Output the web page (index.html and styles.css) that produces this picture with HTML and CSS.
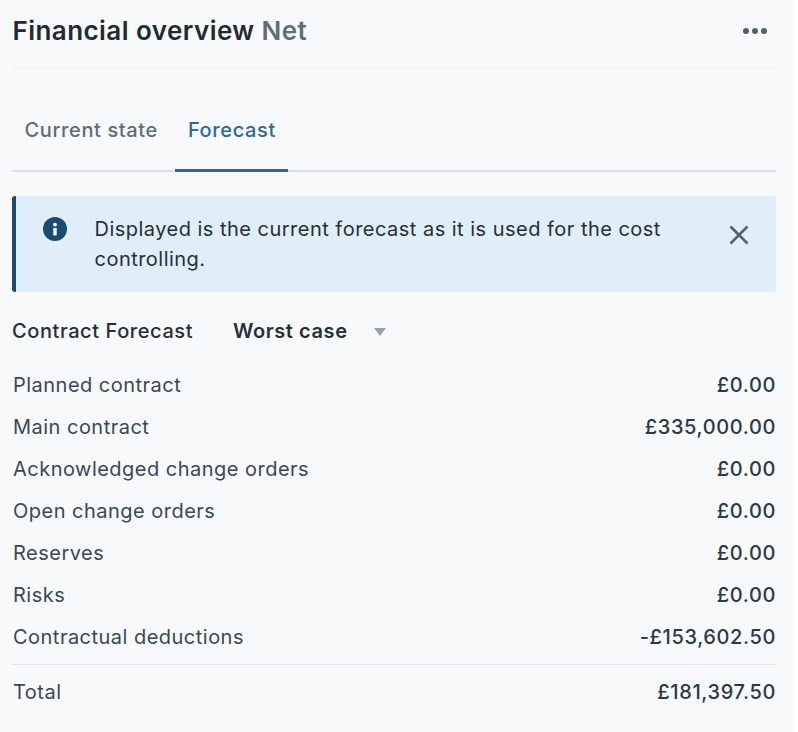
FILE: index.html
```html
<!DOCTYPE html>
<html lang="en">
<head>
<meta charset="utf-8">
<title>Financial overview</title>
<link rel="stylesheet" href="styles.css">
</head>
<body>
<main class="panel">
  <header class="head">
    <h1 class="title">Financial overview <span class="title-sub">Net</span></h1>
    <button class="more" aria-label="More"><span></span><span></span><span></span></button>
  </header>
  <nav class="tabs">
    <a class="tab">Current state</a>
    <a class="tab tab-active">Forecast</a>
  </nav>
  <div class="notice">
    <svg class="notice-icon" viewBox="0 0 24 24" width="24" height="24"><circle cx="12" cy="12" r="12" fill="#1b4b72"/><circle cx="12" cy="7.6" r="1.9" fill="#fff"/><rect x="10.3" y="11" width="3.4" height="7.4" rx="0.6" fill="#fff"/></svg>
    <p class="notice-text">Displayed is the current forecast as it is used for the cost controlling.</p>
    <svg class="notice-close" viewBox="0 0 20 20" width="20" height="20"><path d="M1.5 1.5 18.5 18.5M18.5 1.5 1.5 18.5" stroke="#566269" stroke-width="2.6" fill="none"/></svg>
  </div>
  <div class="selector">
    <span class="selector-label">Contract Forecast</span>
    <span class="selector-value">Worst case</span>
    <span class="caret"></span>
  </div>
  <dl class="rows">
    <div class="row"><dt>Planned contract</dt><dd>£0.00</dd></div>
    <div class="row"><dt>Main contract</dt><dd>£335,000.00</dd></div>
    <div class="row"><dt>Acknowledged change orders</dt><dd>£0.00</dd></div>
    <div class="row"><dt>Open change orders</dt><dd>£0.00</dd></div>
    <div class="row"><dt>Reserves</dt><dd>£0.00</dd></div>
    <div class="row"><dt>Risks</dt><dd>£0.00</dd></div>
    <div class="row"><dt>Contractual deductions</dt><dd>-£153,602.50</dd></div>
    <div class="row row-total"><dt>Total</dt><dd>£181,397.50</dd></div>
  </dl>
</main>
</body>
</html>
```
FILE: styles.css
```css
* { box-sizing: border-box; }
html, body { margin: 0; height: 100%; background: #fff; }
body { font-family: Inter, "Liberation Sans", sans-serif; color: #2b3a47; letter-spacing: 0.48px; }
.panel { width: 794px; height: 732px; background: #f8f9fb; padding: 0 18px 0 12px; }
.head { height: 68px; display: flex; align-items: center; justify-content: space-between; border-bottom: 1px solid #f0f1f3; padding-bottom: 6px; }
.title { margin: 0 0 0 0.5px; font-size: 26px; line-height: 32px; font-weight: 600; color: #212a2f; letter-spacing: 0.44px; }
.title-sub { color: #5f6d75; }
.more { display: flex; gap: 3px; border: 0; background: none; padding: 0; margin: 0 9px 0 0; }
.more span { width: 6px; height: 6px; border-radius: 50%; background: #525f69; }
.tabs { display: flex; gap: 5px; height: 104px; border-bottom: 2px solid #dcdfe6; margin-bottom: 24px; }
.tab { height: 104px; padding: 23px 12.5px 0; display: flex; align-items: center; font-size: 20px; font-weight: 500; color: #5f6d75; letter-spacing: 0.62px; border-bottom: 3px solid transparent; }
.tab-active { color: #2f6796; border-bottom-color: #2f6796; border-radius: 2px 2px 0 0; }
.notice { height: 96px; display: flex; align-items: flex-start; background: #e0eefa; border-left: 4px solid #1b4b72; border-radius: 3px; padding: 21px 27px 0 27px; }
.notice-icon { flex: none; margin-right: 28px; }
.notice-text { margin: -3px 0 0 -0.5px; flex: 1; font-size: 20px; line-height: 30px; color: #262f35; }
.notice-close { flex: none; margin: 8px 0 0 40px; }
.selector { display: flex; align-items: center; height: 30px; margin-top: 24px; font-size: 20px; font-weight: 500; color: #262f35; letter-spacing: 0.58px; }
.selector-label { width: 221px; }
.selector-value { font-weight: 600; margin-right: 26px; }
.caret { width: 0; height: 0; border-left: 6.5px solid transparent; border-right: 6.5px solid transparent; border-top: 8px solid #98a1ac; margin-top: 2px; }
.rows { margin: 18px 0 0; }
.row { display: flex; justify-content: space-between; align-items: center; height: 42px; font-size: 20px; }
.row dt { color: #3a4855; margin-left: 1px; }
.row dd { margin: 0; color: #2b3a47; font-weight: 450; letter-spacing: 0.62px; }
.row-total { height: 55px; border-top: 1px solid #e4e6ea; margin-top: 6px; }
```
